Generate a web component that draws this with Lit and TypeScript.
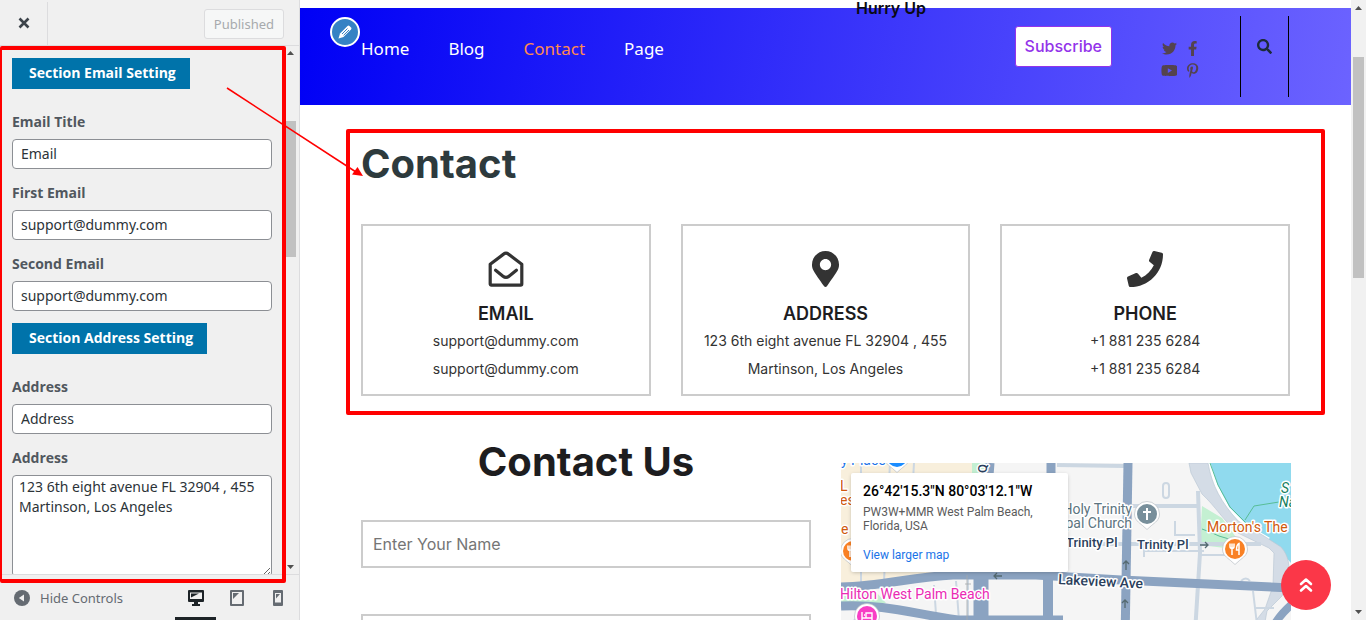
import { LitElement, html, css, svg } from "lit";
import { customElement } from "lit/decorators.js";

const ICONS = {
  twitter: { box: "0 0 512 512", d: "M459.37 151.716c.325 4.548.325 9.097.325 13.645 0 138.72-105.583 298.558-298.558 298.558-59.452 0-114.68-17.219-161.137-47.106 8.447.974 16.568 1.299 25.34 1.299 49.055 0 94.213-16.568 130.274-44.832-46.132-.975-84.792-31.188-98.112-72.772 6.498.974 12.995 1.624 19.818 1.624 9.421 0 18.843-1.3 27.614-3.573-48.081-9.747-84.143-51.98-84.143-102.985v-1.299c13.969 7.797 30.214 12.67 47.431 13.319-28.264-18.843-46.781-51.005-46.781-87.391 0-19.492 5.197-37.36 14.294-52.954 51.655 63.675 129.3 105.258 216.365 109.807-1.624-7.797-2.599-15.918-2.599-24.04 0-57.828 46.782-104.934 104.934-104.934 30.213 0 57.502 12.67 76.67 33.137 23.715-4.548 46.456-13.32 66.599-25.34-7.798 24.366-24.366 44.833-46.132 57.827 21.117-2.273 41.584-8.122 60.426-16.243-14.292 20.791-32.161 39.308-52.628 54.253z" },
  facebook: { box: "0 0 320 512", d: "M279.14 288l14.22-92.66h-88.91v-60.13c0-25.35 12.42-50.06 52.24-50.06h40.42V6.26S260.43 0 225.36 0c-73.22 0-121.08 44.38-121.08 124.72v70.62H22.89V288h81.39v224h100.17V288z" },
  youtube: { box: "0 0 576 512", d: "M549.655 124.083c-6.281-23.65-24.787-42.276-48.284-48.597C458.781 64 288 64 288 64S117.22 64 74.629 75.486c-23.497 6.322-42.003 24.947-48.284 48.597-11.412 42.867-11.412 132.305-11.412 132.305s0 89.438 11.412 132.305c6.281 23.65 24.787 41.5 48.284 47.821C117.22 448 288 448 288 448s170.78 0 213.371-11.486c23.497-6.321 42.003-24.171 48.284-47.821 11.412-42.867 11.412-132.305 11.412-132.305s0-89.438-11.412-132.305zm-317.51 213.508V175.185l142.739 81.205-142.739 81.201z" },
  pinterest: { box: "0 0 384 512", d: "M204 6.5C101.4 6.5 0 74.9 0 185.6 0 256 39.6 296 63.6 296c9.9 0 15.6-27.6 15.6-35.4 0-9.3-23.7-29.1-23.7-67.8 0-80.4 61.2-137.4 140.4-137.4 68.1 0 118.5 38.7 118.5 109.8 0 53.1-21.3 152.7-90.3 152.7-24.9 0-46.2-18-46.2-43.8 0-37.8 26.4-74.4 26.4-113.4 0-66.2-93.9-54.2-93.9 25.8 0 16.8 2.1 35.4 9.6 50.7-13.8 59.4-42 147.9-42 209.1 0 18.9 2.7 37.5 4.5 56.4 3.4 3.8 1.7 3.4 6.9 1.5 50.4-69 48.6-82.5 71.4-172.8 12.3 23.4 44.1 36 69.3 36 106.2 0 153.9-103.5 153.9-196.8C384 71.3 298.2 6.5 204 6.5z" },
  search: { box: "0 0 512 512", d: "M505 442.7L405.3 343c-4.5-4.5-10.6-7-17-7H372c27.6-35.3 44-79.7 44-128C416 93.1 322.9 0 208 0S0 93.1 0 208s93.1 208 208 208c48.3 0 92.7-16.4 128-44v16.3c0 6.4 2.5 12.5 7 17l99.7 99.7c9.4 9.4 24.6 9.4 33.9 0l28.3-28.3c9.4-9.4 9.4-24.6.1-34zM208 336c-70.7 0-128-57.2-128-128 0-70.7 57.2-128 128-128 70.7 0 128 57.2 128 128 0 70.7-57.2 128-128 128z" },
  marker: { box: "0 0 384 512", d: "M172.268 501.67C26.97 291.031 0 269.413 0 192 0 85.961 85.961 0 192 0s192 85.961 192 192c0 77.413-26.97 99.031-172.268 309.67-9.535 13.774-29.93 13.773-39.464 0zM192 272c44.183 0 80-35.817 80-80s-35.817-80-80-80-80 35.817-80 80 35.817 80 80 80z" },
  phone: { box: "0 0 512 512", d: "M493.4 24.6l-104-24c-11.3-2.6-22.9 3.3-27.5 13.9l-48 112c-4.2 9.8-1.4 21.3 6.9 28l60.6 49.6c-36 76.7-98.9 140.5-177.2 177.2l-49.6-60.6c-6.8-8.3-18.2-11.1-28-6.9l-112 48C3.9 366.5-2 378.1.6 389.4l24 104C27.1 504.2 36.7 512 48 512c256.1 0 464-207.5 464-464 0-11.2-7.7-20.9-18.6-23.4z" },
};

const glyph = (name: keyof typeof ICONS, cls: string) => html`
  <svg class=${cls} viewBox=${ICONS[name].box} fill="currentColor" aria-hidden="true"><path d=${ICONS[name].d}></path></svg>`;

const envelope = html`
  <svg class="card-icon" viewBox="0 0 36 36" fill="none" stroke="currentColor" stroke-linecap="round" stroke-linejoin="round" aria-hidden="true">
    <path stroke-width="3.2" d="M2.2 13.2 15.6 3.1q2.4-2 4.8 0L33.8 13.2V33a1.2 1.2 0 0 1-1.2 1.2H3.4A1.2 1.2 0 0 1 2.2 33Z"></path>
    <path stroke-width="3.2" d="M7.6 19.2 15 25.2q3 2.4 6 0L28.4 19.2"></path>
  </svg>`;

@customElement("map-view")
class MapView extends LitElement {
  static styles = css`
    :host { display: block; position: relative; overflow: hidden; height: 300px; background: #f5f5f5; font-family: Roboto, "Liberation Sans", sans-serif; }
    .canvas { display: block; width: 100%; height: 100%; }
    .place { position: absolute; left: 10px; top: 10px; width: 193px; padding: 9px 12px 8px; background: #fff; border-radius: 2px; box-shadow: 0 1px 4px -1px rgba(0, 0, 0, 0.3); }
    .coords { font-size: 14px; font-weight: 500; line-height: 18px; color: #000; white-space: nowrap; }
    .where { margin: 5px 0 14px; font-size: 12px; line-height: 14px; color: #5b5b5b; }
    .larger { display: block; font-size: 12px; line-height: 17px; color: #1a73e8; text-decoration: none; }
    .label { font-size: 14px; paint-order: stroke; stroke: #fff; stroke-width: 3px; stroke-linejoin: round; }
    .road { font-size: 13px; font-weight: 500; fill: #2b3f5c; }
    .major { font-size: 14px; }
    .food { fill: #d0590d; }
    .church { fill: #5c7480; }
    .hotel { fill: #ea2bb4; }
    .shop { fill: #1a73e8; }
    .park { fill: #17805f; font-style: italic; }
  `;

  private pin(x: number, y: number, color: string, mark: unknown) {
    return svg`<g transform="translate(${x} ${y})">
      <path d="M-12.500 0a12.500 12.500 0 1 1 25 0c0 6-4.500 8.500-8 11.500L0 15.500-4.500 11.500C-8 8.500-12.500 6-12.500 0Z" fill="#fff" stroke="#b9bec4" stroke-width="0.700"></path>
      <circle r="10" fill=${color}></circle>${mark}</g>`;
  }

  render() {
    const fork = svg`<path d="M-5-5.500v3a2 2 0 0 0 4 0v-3M-3-5.500V6M4 6v-11.500q-2.500 1-2.500 6.500h2.500" fill="none" stroke="#fff" stroke-width="1.500"></path>`;
    return html`
      <svg class="canvas" viewBox="0 0 450 300" preserveAspectRatio="xMinYMin slice" role="img" aria-label="Map">
        <path fill="#f8efdc" d="M0 0H134V108L60 118 0 120Z"></path>
        <path fill="#c4f0d2" d="M131 0H147V10H131ZM0 133 36 130 45 140 0 141ZM361 43 381 55 397 77 384 85 359 82Z"></path>
        <path fill="#90daee" d="M368 0H450V100L434 82 404 64 386 46 376 25Z"></path>
        <path fill="none" stroke="#fff" stroke-width="3" d="M368 0 375 22 387 45 404 62 428 76"></path>
        <path fill="none" stroke="#58bd96" stroke-width="1" d="M369 0 377 22 389 44 407 62M404 57 413 43 438 39M361 66 369 69 378 73 388 76"></path>
        <path fill="#d4dce6" stroke="#bcc9d5" stroke-width="0.700" d="M348 0H367C371 23 380 39 397 58L423 73 440 84C448 93 449 103 447 115L441 133 426 148 422 170H405L424 146 432 123 433 90 428 85 397 70C382 57 375 44 361 31L350 10Z"></path>
        <g fill="none" stroke="#ccd7e2">
          <path stroke-width="4" d="M357 28 359 90 354 170M216 2 283 3M286 43H358M224 81H420"></path>
          <path stroke-width="2" d="M360 92H397M303 88H363M303 82V94M20 0V119M49 0 43 118M73 0 67 105M127 115V170M115 118 119 170M93 122 96 166M334 58V72H354M412 128 417 170M415 145H433M409 162H433M285 160H420M48 160 78 172M7 166 20 148"></path>
          <rect x="322" y="20" width="6" height="15" rx="3" stroke-width="2"></rect>
          <path stroke-width="2" d="M400 118q5-5 9 0"></path>
        </g>
        <g fill="none" stroke="#8ba3c1">
          <path stroke-width="9" d="M149 0 140 112M210 0V112"></path>
          <path stroke-width="9" d="M287 0 282 300"></path>
          <path stroke-width="15" d="M140 111V300"></path>
          <path stroke-width="10" d="M207 112V300"></path>
          <path stroke-width="9" d="M0 124C42 123 70 114 112 112H195L280 117 450 125"></path>
          <path stroke-width="9" d="M0 143C44 141 73 151 117 157H222"></path>
          <path stroke-width="8" d="M428 175Q432 158 450 142"></path>
        </g>
        <path fill="none" stroke="#a6a9ac" stroke-width="0.800" d="M126 112V300M124 121H130"></path>
        <g fill="none" stroke="#546970" stroke-width="1.300">
          <path d="M161 113H153M156 110 153 113 156 116M285 107V98M282 101 285 98 288 101M284 145V137M281 140 284 137 287 140M359 82H367M364 79 367 82 364 85"></path>
        </g>
        <text class="label shop" x="0" y="2">y Place</text>
        <text class="label food" x="-1" y="28">L</text>
        <text class="label food" x="-1" y="42">es</text>
        <text class="label food" x="0" y="71">e</text>
        <text class="label road" transform="translate(146 10) rotate(-90)">Q</text>
        <text class="label church" x="291" y="51" text-anchor="end">Holy Trinity</text>
        <text class="label church" x="291" y="65" text-anchor="end">Episcopal Church</text>
        <text class="label road" x="225" y="84">Trinity Pl</text>
        <text class="label road" x="296" y="86">Trinity Pl</text>
        <text class="label road major" x="217" y="121" transform="rotate(3 217 121)">Lakeview Ave</text>
        <text class="label food" x="366" y="69">Morton's The</text>
        <text class="label hotel" x="-1" y="136">Hilton West Palm Beach</text>
        <text class="label park" x="440" y="30">S</text>
        <text class="label park" x="438" y="44">Na</text>
        ${this.pin(56, -6, "#1a8cff", null)}
        ${this.pin(12, 88, "#f98125", fork)}
        ${this.pin(306, 51, "#788f9b", svg`<path d="M0-6V6M-4-2H4" stroke="#fff" stroke-width="2" fill="none"></path>`)}
        ${this.pin(394, 86, "#f98125", fork)}
        ${this.pin(26, 153, "#f83fc5", svg`<path d="M-5-4V5M-5 2H5V-3H-1V2M5 5V2M-3-1h1" stroke="#fff" stroke-width="1.400" fill="none"></path>`)}
      </svg>
      <div class="place">
        <div class="coords">26°42'15.3"N 80°03'12.1"W</div>
        <div class="where">PW3W+MMR West Palm Beach, Florida, USA</div>
        <a class="larger" href="#map">View larger map</a>
      </div>`;
  }
}

@customElement("customizer-panel")
class CustomizerPanel extends LitElement {
  static styles = css`
    :host { display: flex; flex-direction: column; position: relative; box-sizing: border-box; height: 100%; min-height: 0; background: #f0f0f0; border-right: 1px solid #dcdcde; font-family: "Noto Sans", sans-serif; font-size: 14px; color: #2c3338; }
    * { box-sizing: border-box; }
    button { font: inherit; cursor: pointer; }
    .top { display: flex; align-items: center; justify-content: space-between; flex: none; height: 46px; padding: 2px 15px 0 0; border-bottom: 1px solid #dcdcde; }
    .close { align-self: stretch; width: 48px; display: grid; place-items: center; padding: 0 0 2px; background: none; border: 0; border-right: 1px solid #dcdcde; color: #3c434a; }
    .close svg { width: 12px; height: 12px; }
    .published { height: 30px; padding: 0 9px; border: 1px solid #dcdcde; border-radius: 3px; background: #f6f7f7; color: #a7aaad; font-size: 13px; line-height: 26px; }
    .middle { flex: 1; min-height: 0; display: flex; overflow: hidden; }
    .fields { flex: 1; min-width: 0; padding: 12px 13px 0 12px; overflow: hidden; }
    .section { display: block; margin: 0 0 21px; padding: 0 14px 2px 17px; height: 31px; border: 0; background: #0073aa; color: #fff; font-family: "Open Sans", sans-serif; font-weight: 700; font-size: 14px; line-height: 29px; white-space: nowrap; }
    .field { display: flex; flex-direction: column; gap: 5px; padding-bottom: 12px; }
    label { font-family: "Open Sans", sans-serif; font-weight: 700; line-height: 24px; color: #50575e; }
    input, textarea { width: 100%; margin: 0; border: 1px solid #8c8f94; border-radius: 4px; background: #fff; color: #2c3338; font: inherit; }
    input { height: 30px; padding: 0 8px 2px; }
    textarea { display: block; height: 102px; padding: 1px 6px; line-height: 20px; resize: vertical; }
    .bar { flex: none; width: 14px; padding: 5px 3px 5px 0; display: flex; flex-direction: column; align-items: center; }
    .bar svg { width: 7px; height: 4px; flex: none; }
    .thumb { align-self: stretch; height: 136px; margin: 66px 0 auto; background: #c1c1c1; }
    .bottom { flex: none; display: flex; align-items: stretch; height: 46px; padding-right: 1px; border-top: 1px solid #dcdcde; }
    .hide { display: flex; align-items: center; gap: 10px; padding: 0 0 0 14px; margin-right: auto; background: none; border: 0; color: #656b72; font-size: 13px; }
    .hide svg { width: 16px; height: 16px; }
    .device { width: 41px; padding: 4px 0 0; display: grid; place-items: center; background: none; border: 0; border-bottom: 3px solid transparent; color: #656b72; }
    .device.on { color: #1d2327; border-bottom-color: #1d2327; }
    .device svg { width: 18px; height: 18px; }
    .mark { position: absolute; inset: 46px 13px 37px 0; border: 4px solid #f00; border-left-width: 2px; border-radius: 2px; pointer-events: none; }
  `;

  private field(id: string, label: string, value: string) {
    return html`<div class="field"><label for=${id}>${label}</label><input id=${id} type="text" .value=${value} /></div>`;
  }

  render() {
    return html`
      <header class="top">
        <button class="close" aria-label="Close"><svg viewBox="0 0 12 12" aria-hidden="true"><path d="M1.500 1.500 10.500 10.500M10.500 1.500 1.500 10.500" stroke="currentColor" stroke-width="2.600"></path></svg></button>
        <button class="published" disabled>Published</button>
      </header>
      <div class="middle">
        <div class="fields">
          <button class="section">Section Email Setting</button>
          ${this.field("email-title", "Email Title", "Email")}
          ${this.field("first-email", "First Email", "support@dummy.com")}
          ${this.field("second-email", "Second Email", "support@dummy.com")}
          <button class="section">Section Address Setting</button>
          ${this.field("address-title", "Address", "Address")}
          <div class="field">
            <label for="address">Address</label>
            <textarea id="address" .value=${"123 6th eight avenue FL 32904 , 455\nMartinson, Los Angeles"}></textarea>
          </div>
        </div>
        <div class="bar" aria-hidden="true">
          <svg viewBox="0 0 7 4"><path d="M0 4 3.500 0 7 4Z" fill="#505050"></path></svg>
          <div class="thumb"></div>
          <svg viewBox="0 0 7 4"><path d="M0 0 3.500 4 7 0Z" fill="#505050"></path></svg>
        </div>
      </div>
      <footer class="bottom">
        <button class="hide">
          <svg viewBox="0 0 16 16" aria-hidden="true"><circle cx="8" cy="8" r="8" fill="currentColor"></circle><path d="M10 4.500V11.500L4.800 8Z" fill="#f0f0f0"></path></svg>
          Hide Controls
        </button>
        <button class="device on" aria-label="Desktop"><svg viewBox="0 0 18 18" fill="currentColor" aria-hidden="true"><path fill-rule="evenodd" d="M2 1H16a1 1 0 0 1 1 1V12a1 1 0 0 1-1 1H11V15H13V17H5V15H7V13H2a1 1 0 0 1-1-1V2a1 1 0 0 1 1-1ZM3 3.500V10H15V3.500Z"></path><path d="M4 4.500H12L4 8.500Z"></path></svg></button>
        <button class="device" aria-label="Tablet"><svg viewBox="0 0 18 18" fill="currentColor" aria-hidden="true"><path fill-rule="evenodd" d="M3 1H15a1 1 0 0 1 1 1V16a1 1 0 0 1-1 1H3a1 1 0 0 1-1-1V2a1 1 0 0 1 1-1ZM4 3V15H14V3Z"></path><path d="M5 4H11L5 10Z"></path></svg></button>
        <button class="device" aria-label="Phone"><svg viewBox="0 0 18 18" fill="currentColor" aria-hidden="true"><path fill-rule="evenodd" d="M5 1H13a1 1 0 0 1 1 1V16a1 1 0 0 1-1 1H5a1 1 0 0 1-1-1V2a1 1 0 0 1 1-1ZM6 4V13.500H12V4Z"></path><path d="M7 5H11L7 9.500Z"></path></svg></button>
      </footer>
      <div class="mark" aria-hidden="true"></div>`;
  }
}

@customElement("site-preview")
class SitePreview extends LitElement {
  static styles = css`
    :host { display: flex; position: relative; height: 100%; min-width: 0; min-height: 0; background: #fff; font-family: Inter, sans-serif; color: #333; }
    * { box-sizing: border-box; }
    a { color: inherit; text-decoration: none; }
    h1, h2, h3, p { margin: 0; }
    .page { flex: 1; min-width: 0; overflow: hidden; }
    .notice { position: relative; z-index: 1; height: 8px; padding-left: 131px; display: flex; align-items: flex-start; justify-content: center; font-size: 16px; font-weight: 600; line-height: 16px; color: #0a0a14; }
    .masthead { position: relative; display: flex; align-items: flex-start; height: 97px; padding: 8px 61px 0; background: linear-gradient(100deg, #0000f5, #6c63ff); }
    .edit { position: absolute; left: 30px; top: 9px; width: 30px; height: 30px; display: grid; place-items: center; padding: 0; border: 2px solid #fff; border-radius: 50%; background: #3582c4; color: #fff; }
    .edit svg { width: 16px; height: 16px; }
    nav { display: flex; gap: 39px; margin-right: auto; padding-top: 20px; font-family: "Noto Sans", sans-serif; font-size: 17px; line-height: 26px; color: #fff; }
    nav .on { color: #ff8a50; }
    .subscribe { height: 41px; margin: 10px 48px 0 0; padding: 0 9px 2px; border: 1px solid #9333ea; border-radius: 3px; background: #fff; color: #9333ea; font: 500 16px/24px Inter, sans-serif; white-space: nowrap; }
    .social { display: grid; grid-template-columns: 18px 14px; gap: 8px; justify-items: center; margin: 25px 40px 0 0; color: #54434f; }
    .social a { display: block; height: 14px; }
    .social svg { display: block; height: 15px; }
    .find { width: 49px; height: 81px; display: flex; justify-content: center; padding: 23px 0 0; border: 0; border-left: 1px solid #000; border-right: 1px solid #000; margin-right: 1px; background: none; color: #1c2b3a; }
    .find svg { width: 15px; height: 15px; }
    .contact { position: relative; margin-top: 24px; padding: 5px 61px 19px; }
    .mark { position: absolute; inset: 0 26px 0 46px; border: 4px solid #f00; border-radius: 2px; pointer-events: none; }
    h1, h2 { font-size: 40px; font-weight: 700; line-height: 60px; }
    h1 { color: #2d3a3d; margin-bottom: 30px; }
    h2 { color: #1d1d1f; text-align: center; margin-bottom: 28px; }
    .cards { display: grid; grid-template-columns: repeat(3, 1fr); gap: 30px; }
    .card { padding: 25px 10px 11px; border: 2px solid #ccc; text-align: center; }
    .card-icon { display: block; height: 36px; margin: 0 auto 14px; }
    .card h3 { font-size: 18px; font-weight: 600; line-height: 26px; color: #1d1d1f; }
    .card p { font-size: 14px; line-height: 28px; }
    .lower { display: grid; grid-template-columns: 1fr 1fr; gap: 30px; padding: 17px 60px 0 61px; }
    .form input { display: block; width: 100%; height: 48px; margin: 0 0 46px; padding: 0 10px; border: 2px solid #ccc; background: #fff; font: 400 16px Inter, sans-serif; color: #333; }
    .form input::placeholder { color: #757575; }
    .map { margin-top: 31px; }
    .scroll { flex: none; width: 15px; padding: 6px 2px; display: flex; flex-direction: column; align-items: center; background: #f1f1f1; }
    .scroll svg { width: 7px; height: 4px; flex: none; }
    .thumb { align-self: stretch; height: 221px; margin: 47px 0 auto; background: #c1c1c1; }
    .up { position: absolute; right: 35px; bottom: 10px; width: 50px; height: 50px; display: grid; place-items: center; padding: 0; border: 0; border-radius: 50%; background: #fb3748; color: #fff; }
    .up svg { width: 16px; height: 18px; }
  `;

  private card(icon: unknown, title: string, lines: string[]) {
    return html`<article class="card">${icon}<h3>${title}</h3>${lines.map((l) => html`<p>${l}</p>`)}</article>`;
  }

  render() {
    return html`
      <div class="page">
        <div class="notice">Hurry Up</div>
        <header class="masthead">
          <button class="edit" aria-label="Edit menu"><svg viewBox="0 0 16 16" aria-hidden="true"><path d="M1.500 14.500 3 9.500 10.500 2 Q11.500 1 12.500 2L14 3.500Q15 4.500 14 5.500L6.500 13Z" fill="currentColor"></path><path d="M5 10 10.500 4.500M6.600 11.300 12 6" stroke="#3582c4" stroke-width="1"></path></svg></button>
          <nav>
            <a href="#home">Home</a><a href="#blog">Blog</a><a href="#contact" class="on">Contact</a><a href="#page">Page</a>
          </nav>
          <button class="subscribe">Subscribe</button>
          <div class="social">
            <a href="#twitter" aria-label="Twitter">${glyph("twitter", "s")}</a>
            <a href="#facebook" aria-label="Facebook">${glyph("facebook", "s")}</a>
            <a href="#youtube" aria-label="YouTube">${glyph("youtube", "s")}</a>
            <a href="#pinterest" aria-label="Pinterest">${glyph("pinterest", "s")}</a>
          </div>
          <button class="find" aria-label="Search">${glyph("search", "s")}</button>
        </header>
        <section class="contact">
          <h1>Contact</h1>
          <div class="cards">
            ${this.card(envelope, "EMAIL", ["support@dummy.com", "support@dummy.com"])}
            ${this.card(glyph("marker", "card-icon"), "ADDRESS", ["123 6th eight avenue FL 32904 , 455", "Martinson, Los Angeles"])}
            ${this.card(glyph("phone", "card-icon"), "PHONE", ["+1 881 235 6284", "+1 881 235 6284"])}
          </div>
          <div class="mark" aria-hidden="true"></div>
        </section>
        <section class="lower">
          <form class="form">
            <h2>Contact Us</h2>
            <input type="text" aria-label="Name" placeholder="Enter Your Name" />
            <input type="email" aria-label="Email" />
          </form>
          <map-view class="map"></map-view>
        </section>
      </div>
      <div class="scroll" aria-hidden="true">
        <svg viewBox="0 0 7 4"><path d="M0 4 3.500 0 7 4Z" fill="#505050"></path></svg>
        <div class="thumb"></div>
        <svg viewBox="0 0 7 4"><path d="M0 0 3.500 4 7 0Z" fill="#505050"></path></svg>
      </div>
      <button class="up" aria-label="Back to top"><svg viewBox="0 0 16 18" fill="none" stroke="currentColor" stroke-width="2.600" stroke-linecap="round" stroke-linejoin="round" aria-hidden="true"><path d="M3 8 8 3.500 13 8M3 14.500 8 10 13 14.500"></path></svg></button>`;
  }
}

@customElement("app-root")
class AppRoot extends LitElement {
  static styles = css`
    :host { display: grid; grid-template-columns: 300px minmax(0, 1fr); grid-template-rows: 100%; position: relative; height: 100vh; overflow: hidden; }
    .pointer { position: absolute; left: 220px; top: 80px; width: 150px; height: 104px; pointer-events: none; }
  `;

  render() {
    return html`
      <customizer-panel></customizer-panel>
      <site-preview></site-preview>
      <svg class="pointer" viewBox="220 80 150 104" aria-hidden="true">
        <path d="M227 88 356 172" stroke="#f00" stroke-width="1.500"></path>
        <path d="M363 176 352 174.500 357.500 167Z" fill="#f00"></path>
      </svg>`;
  }
}
